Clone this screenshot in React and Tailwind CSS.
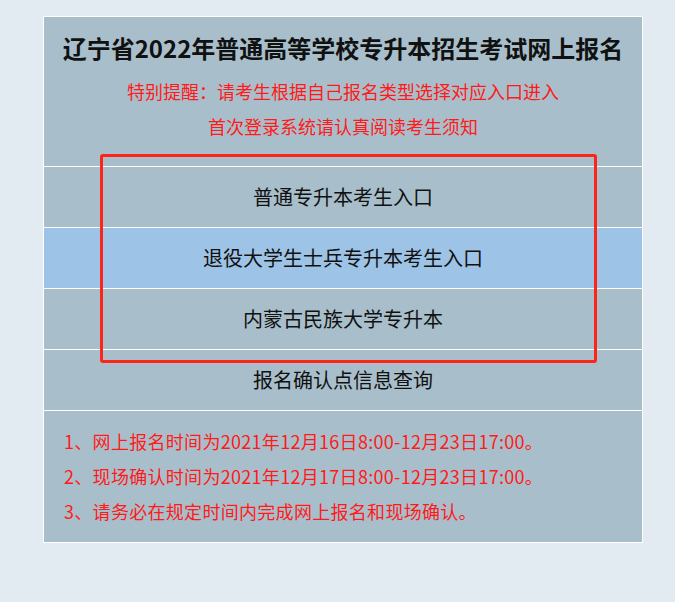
export default function App() {
  const entries = [
    { label: '普通专升本考生入口', active: false },
    { label: '退役大学生士兵专升本考生入口', active: true },
    { label: '内蒙古民族大学专升本', active: false },
    { label: '报名确认点信息查询', active: false },
  ];

  const notes = [
    '1、网上报名时间为2021年12月16日8:00-12月23日17:00。',
    '2、现场确认时间为2021年12月17日8:00-12月23日17:00。',
    '3、请务必在规定时间内完成网上报名和现场确认。',
  ];

  return (
    <div
      className="min-h-[602px] w-full bg-[#e3ebf2] pt-4"
      style={{ fontFamily: '"Noto Sans CJK SC", "Noto Sans", sans-serif' }}
    >
      <div className="relative ml-[43px] w-[600px] border border-white bg-[#a8bfcb]">
        <div className="h-[149px] pt-[15px] text-center">
          <h1 className="text-[24px] font-bold leading-[32px] text-[#111]">
            辽宁省2022年普通高等学校专升本招生考试网上报名
          </h1>
          <p className="mt-[10px] text-[18px] leading-[35px] text-[#ff1a1a]">
            特别提醒：请考生根据自己报名类型选择对应入口进入
          </p>
          <p className="text-[18px] leading-[35px] text-[#ff1a1a]">
            首次登录系统请认真阅读考生须知
          </p>
        </div>

        {entries.map((item) => (
          <div
            key={item.label}
            className={`flex h-[61px] items-center justify-center border-t border-white text-[20px] text-[#111] ${
              item.active ? 'bg-[#9dc3e6]' : ''
            }`}
          >
            {item.label}
          </div>
        ))}

        <div className="h-[132px] border-t border-white pl-[20px] pt-[13px]">
          {notes.map((n) => (
            <p key={n} className="text-[18px] leading-[35px] tracking-[0.3px] text-[#ff1a1a]">
              {n}
            </p>
          ))}
        </div>

        <div className="pointer-events-none absolute left-[56px] top-[137px] h-[209px] w-[497px] rounded-[3px] border-[3px] border-[#ff2418]" />
      </div>
    </div>
  );
}
